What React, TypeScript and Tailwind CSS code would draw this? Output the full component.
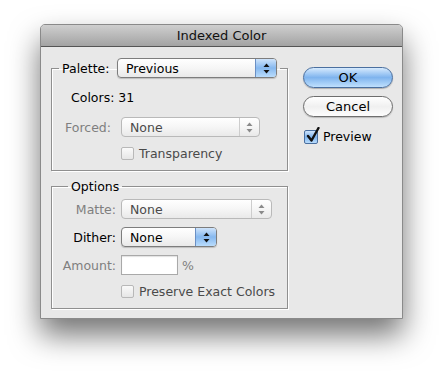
import React from 'react';

const Arrows: React.FC<{ dim?: boolean }> = ({ dim }) => (
  <svg width="7" height="11" viewBox="0 0 7 11">
    <path d="M3.5 0.5 L6.5 4 L0.5 4 Z" fill={dim ? '#8a8a8a' : '#111'} />
    <path d="M3.5 10.5 L6.5 7 L0.5 7 Z" fill={dim ? '#8a8a8a' : '#111'} />
  </svg>
);

const Popup: React.FC<{ value: string; width: string; disabled?: boolean }> = ({ value, width, disabled }) => (
  <div
    className={`flex h-[20px] ${width} overflow-hidden rounded-[4px] border ${
      disabled ? 'border-[#b9b9b9]' : 'border-[#7d7d7d] shadow-[0_1px_1px_rgba(0,0,0,0.18)]'
    } bg-gradient-to-b from-white via-[#f6f6f6] to-[#e9e9e9]`}
  >
    <div className={`flex flex-1 items-center pl-[8px] ${disabled ? 'text-[#4a4a4a]' : 'text-black'}`}>{value}</div>
    {disabled ? (
      <div className="flex w-[20px] items-center justify-center border-l border-[#cdcdcd]">
        <Arrows dim />
      </div>
    ) : (
      <div className="flex w-[21px] items-center justify-center border-l border-[#6a8fc4] bg-gradient-to-b from-[#cfe4fb] via-[#86b8ef] to-[#b9dcfc]">
        <Arrows />
      </div>
    )}
  </div>
);

const Check: React.FC<{ label: string }> = ({ label }) => (
  <div className="flex items-center">
    <div className="h-[13px] w-[13px] rounded-[2px] border border-[#b8b8b8] bg-gradient-to-b from-[#fafafa] to-[#e6e6e6]" />
    <span className="ml-[5px] text-[#4a4a4a]">{label}</span>
  </div>
);

export default function App() {
  return (
    <div className="min-h-[374px] bg-white pl-[40px] pt-[24px] font-['Lucida_Grande','DejaVu_Sans',sans-serif] text-[12.5px] leading-[15px] text-black">
      <div className="h-[295px] w-[363px] overflow-hidden rounded-t-[5px] border border-[#8a8a8a] bg-[#e8e8e8] shadow-[0_16px_30px_rgba(0,0,0,0.55)]">
        {/* Title bar */}
        <div className="flex h-[22px] items-center justify-center border-b border-[#555] bg-gradient-to-b from-[#cfcfcf] to-[#a3a3a3] text-[13px] text-[#111]">
          Indexed Color
        </div>

        <div className="flex pl-[10px] pt-[11px]">
          {/* Left column */}
          <div className="flex w-[237px] flex-col">
            <fieldset className="border border-[#8f8f8f] pb-[9px] shadow-[1px_1px_0_#fff,inset_1px_1px_0_#fff]">
              <legend className="ml-[7px] flex items-center px-[3px]">
                <span className="w-[55px]">Palette:</span>
                <Popup value="Previous" width="w-[160px]" />
              </legend>
              <div className="mt-[12px] pl-[19px]">Colors: 31</div>
              <div className="mt-[12px] flex items-center">
                <span className="w-[59px] text-right text-[#7f7f7f]">Forced:</span>
                <div className="ml-[10px]">
                  <Popup value="None" width="w-[139px]" disabled />
                </div>
              </div>
              <div className="mt-[9px] pl-[69px]">
                <Check label="Transparency" />
              </div>
            </fieldset>

            <fieldset className="mt-[8px] border border-[#8f8f8f] pb-[9px] shadow-[1px_1px_0_#fff,inset_1px_1px_0_#fff]">
              <legend className="ml-[16px] px-[3px]">Options</legend>
              <div className="mt-[5px] flex items-center">
                <span className="w-[64px] text-right text-[#7f7f7f]">Matte:</span>
                <div className="ml-[5px]">
                  <Popup value="None" width="w-[151px]" disabled />
                </div>
              </div>
              <div className="mt-[8px] flex items-center">
                <span className="w-[64px] text-right">Dither:</span>
                <div className="ml-[5px]">
                  <Popup value="None" width="w-[96px]" />
                </div>
              </div>
              <div className="mt-[8px] flex items-center">
                <span className="w-[64px] text-right text-[#7f7f7f]">Amount:</span>
                <div className="ml-[5px] h-[20px] w-[57px] border border-[#a9a9a9] bg-white shadow-[inset_0_1px_1px_rgba(0,0,0,0.12)]" />
                <span className="ml-[4px] text-[#7f7f7f]">%</span>
              </div>
              <div className="mt-[9px] pl-[69px]">
                <Check label="Preserve Exact Colors" />
              </div>
            </fieldset>
          </div>

          {/* Right column */}
          <div className="ml-[15px] flex w-[90px] flex-col">
            <button className="mt-[9px] h-[21px] rounded-full border border-[#4a6f9f] bg-gradient-to-b from-[#d6eafd] via-[#7fb4ee] to-[#bfe0fd] text-[13px] text-black shadow-[0_1px_1px_rgba(0,0,0,0.25)]">
              OK
            </button>
            <button className="mt-[8px] h-[21px] rounded-full border border-[#6e6e6e] bg-gradient-to-b from-white via-[#f0f0f0] to-[#fdfdfd] text-[13px] text-black shadow-[0_1px_1px_rgba(0,0,0,0.2)]">
              Cancel
            </button>
            <div className="mt-[12px] flex items-center pl-[1px]">
              <div className="relative h-[14px] w-[14px] rounded-[2px] border border-[#4a6f9f] bg-gradient-to-b from-[#cfe4fb] via-[#7fb4ee] to-[#b9dcfc]">
                <svg className="absolute -top-[4px] left-[1px]" width="14" height="16" viewBox="0 0 14 16">
                  <path d="M2 9 L5.5 13.5 L12.5 1" fill="none" stroke="#111" strokeWidth="2.4" strokeLinecap="round" strokeLinejoin="round" />
                </svg>
              </div>
              <span className="ml-[5px]">Preview</span>
            </div>
          </div>
        </div>
      </div>
    </div>
  );
}
